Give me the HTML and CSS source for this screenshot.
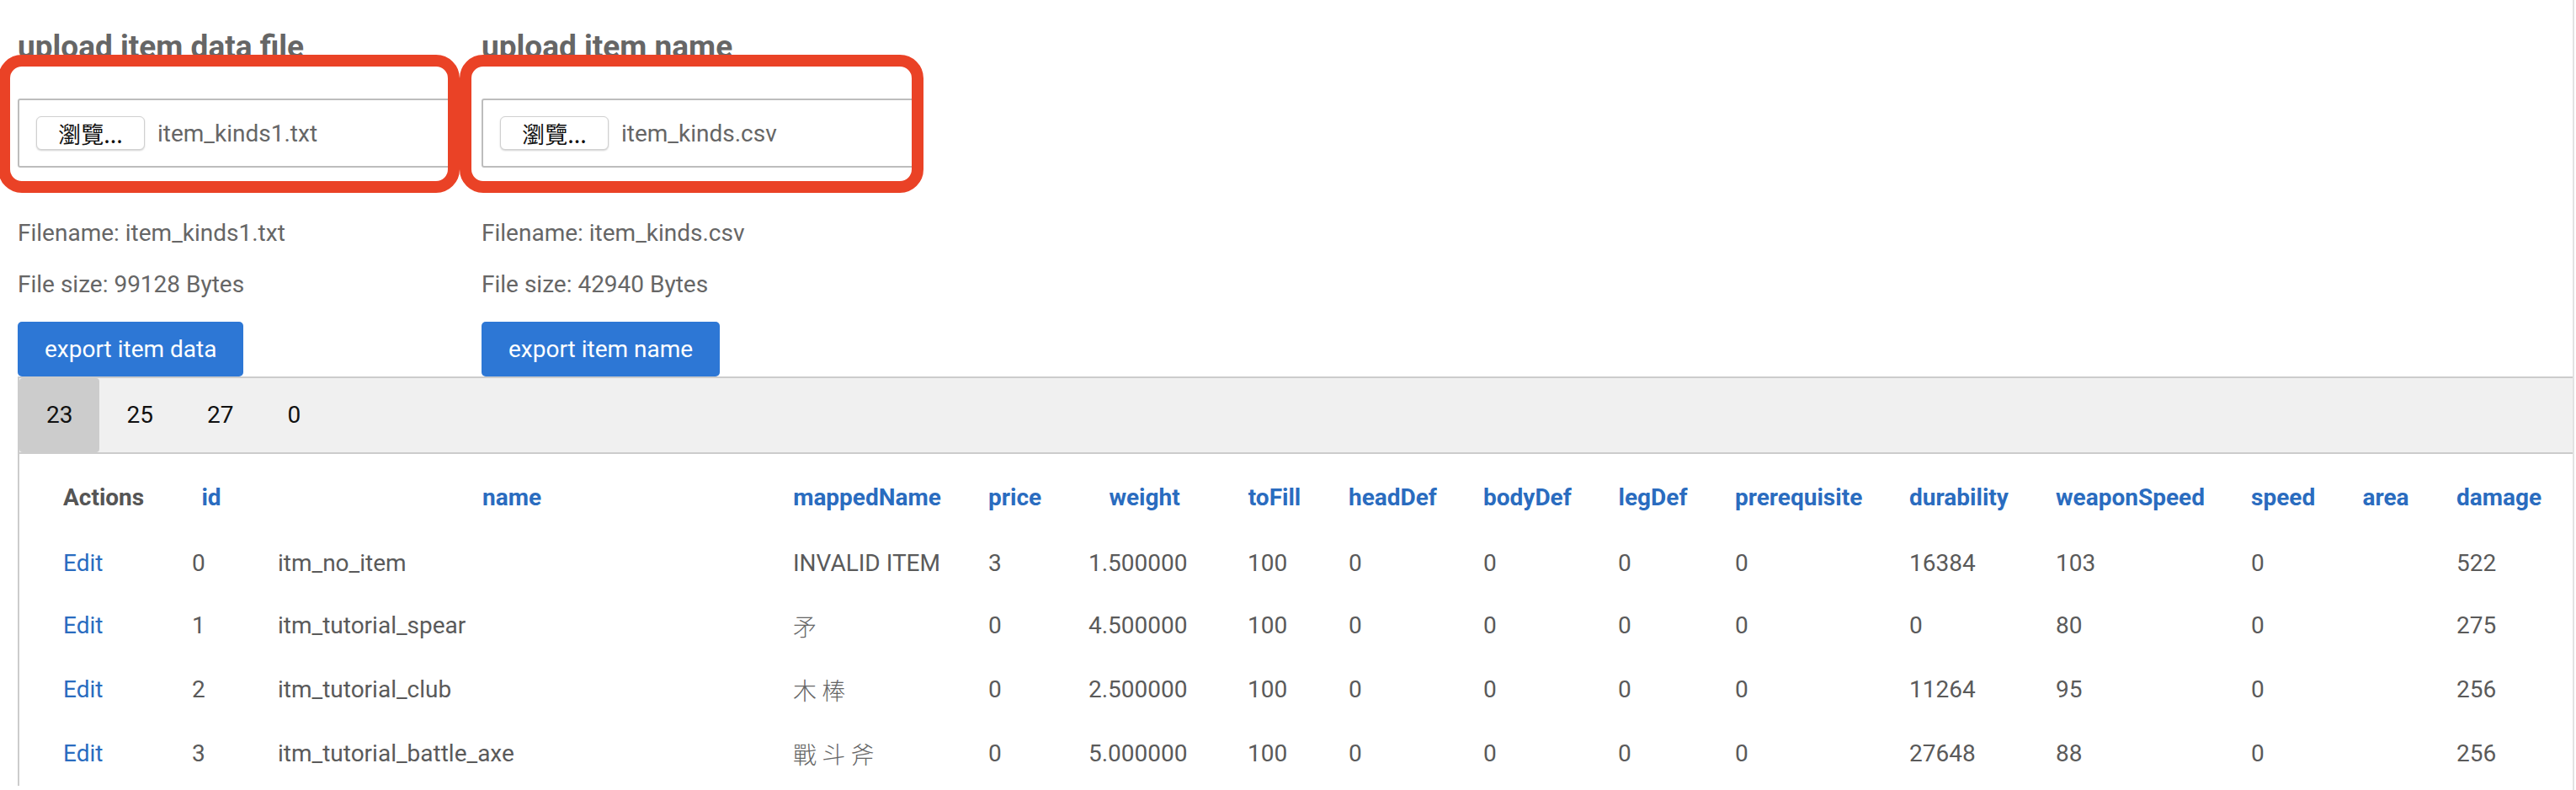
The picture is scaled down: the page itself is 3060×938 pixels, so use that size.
FILE: index.html
```html
<!DOCTYPE html>
<html lang="en">
<head>
<meta charset="utf-8">
<title>Item data editor</title>
<link rel="stylesheet" href="styles.css">
</head>
<body>
<div class="page">
  <section class="uploads">
    <div class="upload">
      <h3 class="upload-title">upload item data file</h3>
      <div class="file-box">
        <span class="browse-btn">瀏覽...</span>
        <span class="file-name">item_kinds1.txt</span>
      </div>
      <span class="callout callout-first"></span>
      <p class="file-meta first">Filename: item_kinds1.txt</p>
      <p class="file-meta">File size: 99128 Bytes</p>
      <button class="export-btn" type="button">export item data</button>
    </div>
    <div class="upload">
      <h3 class="upload-title">upload item name</h3>
      <div class="file-box">
        <span class="browse-btn">瀏覽...</span>
        <span class="file-name">item_kinds.csv</span>
      </div>
      <span class="callout callout-second"></span>
      <p class="file-meta first">Filename: item_kinds.csv</p>
      <p class="file-meta">File size: 42940 Bytes</p>
      <button class="export-btn" type="button">export item name</button>
    </div>
  </section>

  <section class="data-panel">
    <nav class="tabs">
      <span class="tab active">23</span>
      <span class="tab">25</span>
      <span class="tab">27</span>
      <span class="tab">0</span>
    </nav>
    <table class="items">
      <colgroup>
        <col class="c-actions"><col class="c-id"><col class="c-name"><col class="c-mapped">
        <col class="c-price"><col class="c-weight"><col class="c-tofill"><col class="c-head">
        <col class="c-body"><col class="c-leg"><col class="c-prereq"><col class="c-dur">
        <col class="c-wspeed"><col class="c-speed"><col class="c-area"><col class="c-damage">
      </colgroup>
      <thead>
        <tr>
          <th class="plain">Actions</th>
          <th>id</th>
          <th>name</th>
          <th>mappedName</th>
          <th>price</th>
          <th>weight</th>
          <th>toFill</th>
          <th>headDef</th>
          <th>bodyDef</th>
          <th>legDef</th>
          <th>prerequisite</th>
          <th>durability</th>
          <th>weaponSpeed</th>
          <th>speed</th>
          <th>area</th>
          <th>damage</th>
        </tr>
      </thead>
      <tbody>
        <tr>
          <td><a class="edit" href="#">Edit</a></td>
          <td>0</td><td>itm_no_item</td><td>INVALID ITEM</td><td>3</td><td>1.500000</td><td>100</td>
          <td>0</td><td>0</td><td>0</td><td>0</td><td>16384</td><td>103</td><td>0</td><td></td><td>522</td>
        </tr>
        <tr>
          <td><a class="edit" href="#">Edit</a></td>
          <td>1</td><td>itm_tutorial_spear</td><td class="cjk">矛</td><td>0</td><td>4.500000</td><td>100</td>
          <td>0</td><td>0</td><td>0</td><td>0</td><td>0</td><td>80</td><td>0</td><td></td><td>275</td>
        </tr>
        <tr>
          <td><a class="edit" href="#">Edit</a></td>
          <td>2</td><td>itm_tutorial_club</td><td class="cjk">木 棒</td><td>0</td><td>2.500000</td><td>100</td>
          <td>0</td><td>0</td><td>0</td><td>0</td><td>11264</td><td>95</td><td>0</td><td></td><td>256</td>
        </tr>
        <tr>
          <td><a class="edit" href="#">Edit</a></td>
          <td>3</td><td>itm_tutorial_battle_axe</td><td class="cjk">戰 斗 斧</td><td>0</td><td>5.000000</td><td>100</td>
          <td>0</td><td>0</td><td>0</td><td>0</td><td>27648</td><td>88</td><td>0</td><td></td><td>256</td>
        </tr>
      </tbody>
    </table>
  </section>
</div>
</body>
</html>
```

FILE: styles.css
```css
html, body {
  margin: 0;
  padding: 0;
  background: #ffffff;
}

body {
  font-family: Roboto, "Noto Sans CJK TC", sans-serif;
  color: #555555;
}

.page {
  box-sizing: border-box;
  width: 3058px;
  min-height: 100vh;
  border-right: 2px solid #e2e2e2;
}

/* ---------- upload columns ---------- */
.uploads {
  display: flex;
  gap: 31px;
  padding-left: 21px;
}

.upload {
  position: relative;
  width: 520px;
}

.upload-title {
  margin: 34px 0 0;
  font-size: 37px;
  line-height: 44px;
  font-weight: 700;
  color: #666666;
  white-space: nowrap;
}

.file-box {
  box-sizing: border-box;
  margin-top: 39px;
  height: 82px;
  border: 2px solid #bdbdbd;
  border-radius: 3px;
  display: flex;
  align-items: center;
  padding-left: 20px;
  background: #fff;
}

.browse-btn {
  box-sizing: border-box;
  height: 40px;
  width: 129px;
  display: flex;
  align-items: center;
  justify-content: center;
  border: 1px solid #d0d0d0;
  border-radius: 6px;
  background: #ffffff;
  box-shadow: 0 1px 2px rgba(0, 0, 0, 0.18);
  font-family: "Noto Sans CJK TC", sans-serif;
  font-size: 27px;
  color: #111111;
}

.file-name {
  margin-left: 15px;
  font-size: 28px;
  color: #666666;
}

/* annotation rings drawn over the file pickers */
.callout {
  position: absolute;
  top: 65px;
  height: 164px;
  box-sizing: border-box;
  border: 14px solid #ea4226;
  border-radius: 28px;
  pointer-events: none;
}

.callout-first {
  left: -23px;
  width: 548px;
}

.callout-second {
  left: -26px;
  width: 551px;
}

.file-meta {
  margin: 19px 0 0;
  font-size: 28px;
  line-height: 42px;
  color: #666666;
  white-space: nowrap;
}

.file-meta.first {
  margin-top: 57px;
}

.export-btn {
  display: block;
  margin-top: 23px;
  height: 65px;
  padding: 0 32px;
  border: none;
  border-radius: 5px;
  background: #2d77d5;
  color: #ffffff;
  font-family: Roboto, sans-serif;
  font-size: 28px;
  white-space: nowrap;
}

/* ---------- data panel ---------- */
.data-panel {
  margin-left: 21px;
  border-left: 2px solid #cccccc;
}

.tabs {
  display: flex;
  height: 88px;
  background: #f0f0f0;
  border-top: 2px solid #cccccc;
  border-bottom: 2px solid #cccccc;
}

.tab {
  padding: 0 32px;
  line-height: 88px;
  font-size: 28px;
  color: #111111;
}

.tab.active {
  background: #cccccc;
  border-radius: 4px;
}

.items {
  margin: 14px 0 0 24px;
  width: 2999px;
  table-layout: fixed;
  border-collapse: collapse;
}

.items th,
.items td {
  padding: 17px 28px;
  font-size: 28px;
  line-height: 42px;
  white-space: nowrap;
}

.items td {
  height: 42px;
}

.items tbody tr {
  height: 76px;
}

.items tbody tr:first-child td {
  padding-top: 19px;
  padding-bottom: 15px;
}

.items th {
  font-weight: 700;
  color: #2a6cbf;
  text-align: center;
}

.items th.plain {
  color: #555555;
  text-align: left;
}

.items td {
  color: #5a5a5a;
  text-align: left;
}

.items td.cjk {
  font-family: "Noto Sans CJK TC", sans-serif;
  font-weight: 300;
  color: #666666;
}

.edit {
  color: #2a6cbf;
  text-decoration: none;
}

.c-actions { width: 153px; }
.c-id      { width: 102px; }
.c-name    { width: 612px; }
.c-mapped  { width: 232px; }
.c-price   { width: 119px; }
.c-weight  { width: 189px; }
.c-tofill  { width: 120px; }
.c-head    { width: 160px; }
.c-body    { width: 160px; }
.c-leg     { width: 139px; }
.c-prereq  { width: 207px; }
.c-dur     { width: 174px; }
.c-wspeed  { width: 232px; }
.c-speed   { width: 132px; }
.c-area    { width: 112px; }
.c-damage  { width: 156px; }
```
